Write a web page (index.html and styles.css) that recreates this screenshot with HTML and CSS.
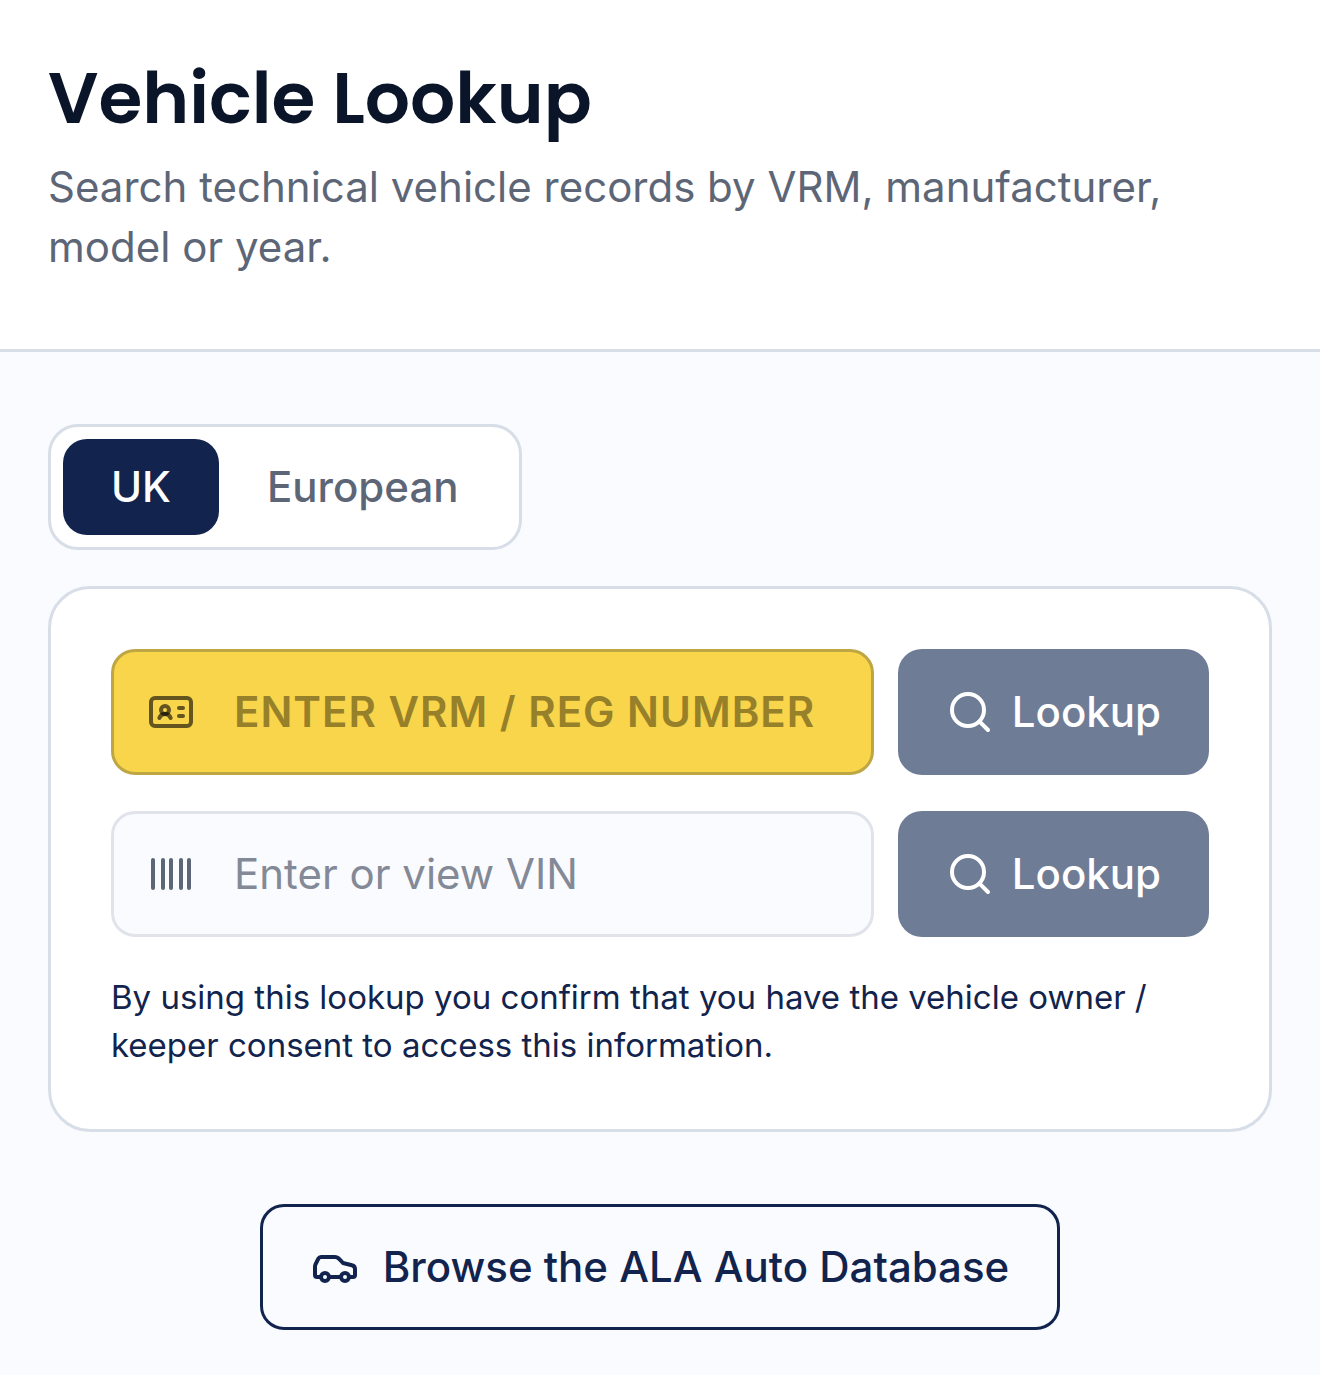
FILE: index.html
```html
<!DOCTYPE html>
<html lang="en">
<head>
  <meta charset="UTF-8">
  <meta name="viewport" content="width=device-width, initial-scale=1">
  <title>Vehicle Lookup</title>
  <link rel="stylesheet" href="styles.css">
</head>
<body>

<header class="page-header">
  <h1>Vehicle Lookup</h1>
  <p>Search technical vehicle records by VRM, manufacturer, model or year.</p>
</header>

<main class="content">
  <div class="tabs">
    <button type="button" class="tab active">UK</button>
    <button type="button" class="tab">European</button>
  </div>

  <section class="card">
    <form class="lookup-row">
      <label class="field field-vrm">
        <svg class="icon" viewBox="0 0 24 24" aria-hidden="true">
          <path d="M16 10h2"/>
          <path d="M16 14h2"/>
          <path d="M6.17 15a3 3 0 0 1 5.66 0"/>
          <circle cx="9" cy="11" r="2"/>
          <rect x="2" y="5" width="20" height="14" rx="2"/>
        </svg>
        <input type="text" name="vrm" placeholder="ENTER VRM / REG NUMBER">
      </label>
      <button type="submit" class="lookup-btn">
        <svg class="icon" viewBox="0 0 24 24" aria-hidden="true">
          <circle cx="11" cy="11" r="8"/>
          <path d="m21 21-4.35-4.35"/>
        </svg>
        Lookup
      </button>
    </form>

    <form class="lookup-row">
      <label class="field field-vin">
        <svg class="icon" viewBox="0 0 24 24" aria-hidden="true">
          <path d="M3 5v14"/>
          <path d="M8 5v14"/>
          <path d="M12 5v14"/>
          <path d="M17 5v14"/>
          <path d="M21 5v14"/>
        </svg>
        <input type="text" name="vin" placeholder="Enter or view VIN">
      </label>
      <button type="submit" class="lookup-btn">
        <svg class="icon" viewBox="0 0 24 24" aria-hidden="true">
          <circle cx="11" cy="11" r="8"/>
          <path d="m21 21-4.35-4.35"/>
        </svg>
        Lookup
      </button>
    </form>

    <p class="consent">By using this lookup you confirm that you have the vehicle owner / keeper consent to access this information.</p>
  </section>

  <button type="button" class="browse-btn">
    <svg class="icon" viewBox="0 0 24 24" aria-hidden="true">
      <path d="M19 17h2c.6 0 1-.4 1-1v-3c0-.9-.7-1.7-1.5-1.9C18.7 10.6 16 10 16 10s-1.3-1.4-2.2-2.3c-.5-.4-1.1-.7-1.8-.7H5c-.6 0-1.1.4-1.4.9l-1.4 2.9A3.7 3.7 0 0 0 2 12v4c0 .6.4 1 1 1h2"/>
      <circle cx="7" cy="17" r="2"/>
      <path d="M9 17h6"/>
      <circle cx="17" cy="17" r="2"/>
    </svg>
    Browse the ALA Auto Database
  </button>
</main>

</body>
</html>
```
FILE: styles.css
```css
* {
  box-sizing: border-box;
}
body {
  margin: 0;
  font-family: Inter, "Liberation Sans", sans-serif;
  font-size: 42px;
  line-height: 60px;
  color: #12244d;
  background: #f9fbff;
}
h1, p {
  margin: 0;
}
button, input {
  font: inherit;
  color: inherit;
}
button {
  cursor: pointer;
}
.icon {
  width: 48px;
  height: 48px;
  flex: none;
  fill: none;
  stroke: currentColor;
  stroke-width: 2;
  stroke-linecap: round;
  stroke-linejoin: round;
}

.page-header {
  padding: 48px 48px 72px;
  background: #fff;
  border-bottom: 3px solid #d8dee7;
}
.page-header h1 {
  margin-bottom: 8px;
  font-family: Poppins, Inter, sans-serif;
  font-size: 71px;
  line-height: 101px;
  font-weight: 600;
  color: #0a1529;
}
.page-header p {
  color: #5d6677;
}

.content {
  display: flex;
  flex-direction: column;
  align-items: flex-start;
  padding: 72px 48px 45px;
}

.tabs {
  display: flex;
  padding: 12px;
  margin-bottom: 36px;
  background: #fff;
  border: 3px solid #d8dee7;
  border-radius: 30px;
}
.tab {
  padding: 18px 48px;
  border: none;
  border-radius: 24px;
  background: transparent;
  font-weight: 500;
  color: #5d6677;
}
.tab.active {
  background: #12244d;
  color: #fff;
}

.card {
  display: flex;
  flex-direction: column;
  gap: 36px;
  width: 100%;
  padding: 60px;
  background: #fff;
  border: 3px solid #d8dee7;
  border-radius: 42px;
}
.lookup-row {
  display: flex;
  gap: 24px;
}
.field {
  flex: 1;
  min-width: 0;
  display: flex;
  align-items: center;
  gap: 39px;
  padding: 30px 33px;
  border: 3px solid #e0e4ea;
  border-radius: 24px;
}
.field input {
  flex: 1;
  min-width: 0;
  padding: 0;
  border: none;
  outline: none;
  background: transparent;
}
/* number plate look */
.field-vrm {
  background: #f8d54a;
  border-color: #bfa645;
  color: #000;
  font-weight: 600;
}
.field-vrm .icon {
  color: rgba(0, 0, 0, 0.6);
}
.field-vrm input {
  letter-spacing: 1px;
  text-transform: uppercase;
}
.field-vrm input::placeholder {
  color: #96802a;
}
.field-vin {
  background: #f9fbff;
}
.field-vin .icon {
  color: #5d6677;
}
.field-vin input::placeholder {
  color: #838996;
}

.lookup-btn {
  display: flex;
  align-items: center;
  gap: 18px;
  padding: 33px 48px;
  border: none;
  border-radius: 24px;
  background: #6f7c96;
  font-weight: 500;
  color: #fff;
}
.consent {
  font-size: 33px;
  line-height: 48px;
}

.browse-btn {
  display: flex;
  align-items: center;
  align-self: center;
  gap: 24px;
  margin-top: 72px;
  padding: 30px 48px;
  border: 3px solid #12244d;
  border-radius: 24px;
  background: transparent;
  font-weight: 500;
}
```
